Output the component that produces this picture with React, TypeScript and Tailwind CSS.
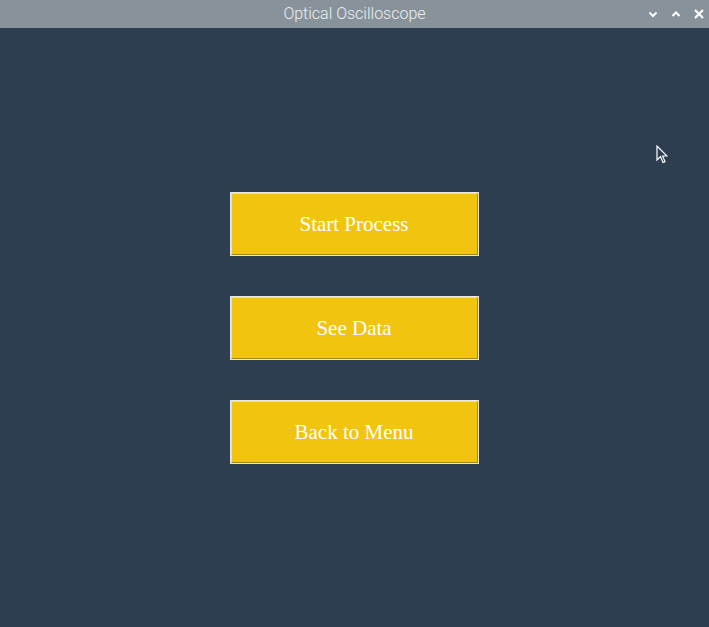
import React from "react";

const actions = ["Start Process", "See Data", "Back to Menu"];

export default function App() {
  return (
    <div className="relative w-[709px] h-[627px] overflow-hidden bg-[#2c3e50] flex flex-col">
      {/* window title bar */}
      <div className="relative h-[28px] bg-[#87929a] flex items-center justify-center shrink-0">
        <span className="text-[#eef0f1] text-[16px] font-light" style={{ fontFamily: "Roboto, sans-serif" }}>
          Optical Oscilloscope
        </span>
        <div className="absolute right-[4px] top-0 h-full flex items-center gap-[11px] text-white">
          <svg width="12" height="12" viewBox="0 0 12 12">
            <path d="M2.5 4.5 L6 8 L9.5 4.5" fill="none" stroke="white" strokeWidth="2" />
          </svg>
          <svg width="12" height="12" viewBox="0 0 12 12">
            <path d="M2.5 8 L6 4.5 L9.5 8" fill="none" stroke="white" strokeWidth="2" />
          </svg>
          <svg width="12" height="12" viewBox="0 0 12 12">
            <path d="M2 2 L10 10 M10 2 L2 10" fill="none" stroke="white" strokeWidth="2.2" />
          </svg>
        </div>
      </div>

      <div className="flex flex-col items-center pt-[164px] gap-[40px] pr-[1px]">
        {actions.map((label) => (
          <button
            key={label}
            className="w-[249px] h-[64px] border border-[#e6e6e2] bg-[#f1c40f] p-0"
          >
            <div
              className="w-full h-full flex items-center justify-center pt-[2px] border-t border-l border-t-[#f8e27a] border-l-[#f8e27a] border-b border-r border-b-[#a8870a] border-r-[#a8870a] text-white text-[21px]"
              style={{ fontFamily: '"Liberation Serif", serif' }}
            >
              {label}
            </div>
          </button>
        ))}
      </div>

      {/* mouse pointer */}
      <svg className="absolute left-[656px] top-[145px]" width="12" height="19" viewBox="0 0 12 19">
        <path d="M1 1 L1 15 L4.5 11.5 L7 17.5 L9 16.6 L6.6 11 L11 11 Z" fill="#2c3e50" stroke="white" strokeWidth="1.2" />
      </svg>
    </div>
  );
}
